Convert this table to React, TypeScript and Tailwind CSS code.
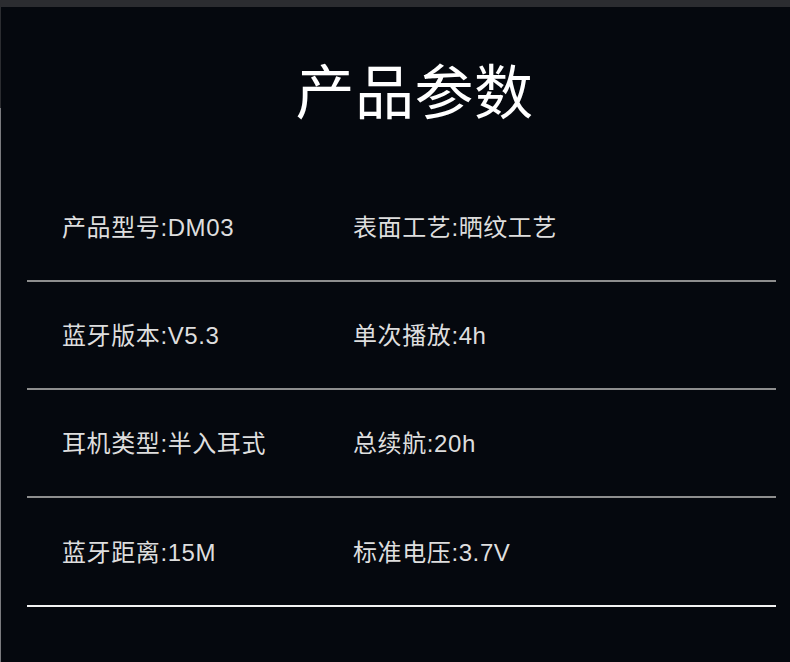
export default function App() {
  const rows: [string, string][] = [
    ["产品型号:DM03", "表面工艺:晒纹工艺"],
    ["蓝牙版本:V5.3", "单次播放:4h"],
    ["耳机类型:半入耳式", "总续航:20h"],
    ["蓝牙距离:15M", "标准电压:3.7V"],
  ];
  return (
    <div
      className="w-[790px] h-[662px] bg-[#05080e] flex flex-col overflow-hidden"
      style={{ fontFamily: "'Liberation Sans','Noto Sans CJK SC',sans-serif" }}
    >
      <div className="h-[7px] bg-[#2b2c30] shrink-0" />
      <div className="flex-1 flex">
        <div className="w-[1px] flex flex-col shrink-0">
          <div className="h-[101px] bg-[#2b2c30]" />
          <div className="flex-1 bg-[#7a7a7e]" />
        </div>
        <div className="flex-1 flex flex-col">
          <div className="h-[167px] flex items-start justify-center pl-[38px] pt-[47px]">
            <h1 className="text-[59px] leading-[80px] text-white tracking-[0.5px]">产品参数</h1>
          </div>
          {rows.map((r, i) => (
            <div key={i} className="flex flex-col ml-[26px] mr-[14px]">
              <div
                className={
                  (i === 3 ? "h-[107px] " : "h-[106px] ") +
                  "flex items-center pt-[2px] text-[24px] tracking-[0.6px] text-[#dedede]"
                }
              >
                <div className="w-[326px] pl-[35px]">{r[0]}</div>
                <div>{r[1]}</div>
              </div>
              <div className={i === 3 ? "h-[2px] bg-[#f2f2f2]" : "h-[2px] bg-[#8e8e8e]"} />
            </div>
          ))}
        </div>
      </div>
    </div>
  );
}
